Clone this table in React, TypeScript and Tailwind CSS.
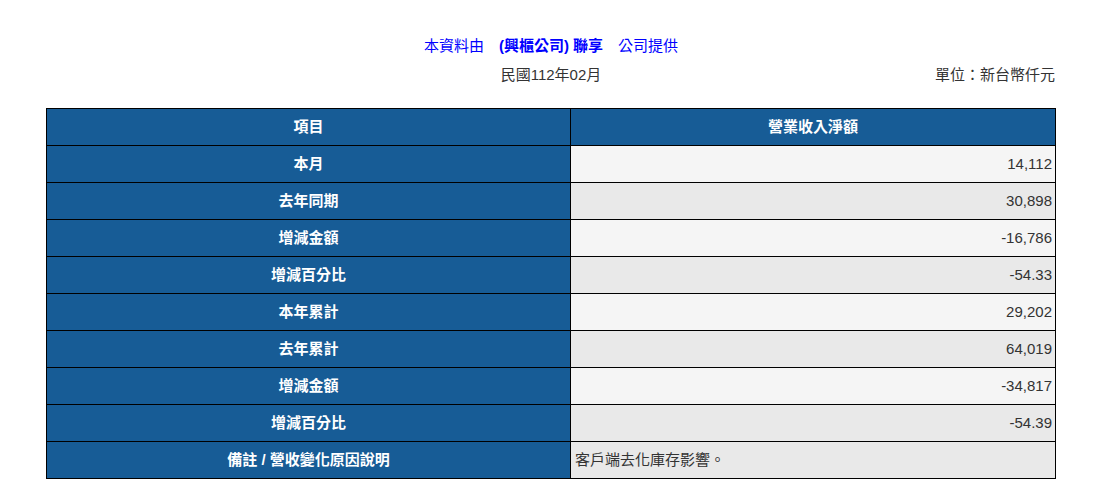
const rows: { label: string; value: string }[] = [
  { label: "本月", value: "14,112" },
  { label: "去年同期", value: "30,898" },
  { label: "增減金額", value: "-16,786" },
  { label: "增減百分比", value: "-54.33" },
  { label: "本年累計", value: "29,202" },
  { label: "去年累計", value: "64,019" },
  { label: "增減金額", value: "-34,817" },
  { label: "增減百分比", value: "-54.39" },
];

export default function App() {
  return (
    <div className="min-h-screen bg-white font-['Liberation_Sans','Noto_Sans_CJK_TC',sans-serif] text-[15px] text-[#333]">
      <div className="ml-[46px] w-[1010px] pt-[36px]">
        <p className="text-center leading-[20px] text-[#0000ff]">
          本資料由　<b>(興櫃公司) 聯享</b>　公司提供
        </p>
        <div className="mt-[9px] grid grid-cols-[1fr_auto_1fr] items-center leading-[20px]">
          <span />
          <span>民國112年02月</span>
          <span className="pr-[1px] text-right">單位：新台幣仟元</span>
        </div>
        <table className="mt-[23px] w-full border-collapse">
          <thead>
            <tr>
              <th className="h-[37px] w-[524px] border border-black bg-[#175c96] font-bold text-white">項目</th>
              <th className="h-[37px] border border-black bg-[#175c96] font-bold text-white">營業收入淨額</th>
            </tr>
          </thead>
          <tbody>
            {rows.map((r, i) => (
              <tr key={i}>
                <td className="h-[37px] border border-black bg-[#175c96] text-center font-bold text-white">{r.label}</td>
                <td className={`h-[37px] border border-black pr-[3px] text-right ${i % 2 === 0 ? "bg-[#f5f5f5]" : "bg-[#e9e9e9]"}`}>
                  {r.value}
                </td>
              </tr>
            ))}
            <tr>
              <td className="h-[37px] border border-black bg-[#175c96] text-center font-bold text-white">備註 / 營收變化原因說明</td>
              <td className="h-[37px] border border-black bg-[#e9e9e9] pl-[4px] text-left">客戶端去化庫存影響。</td>
            </tr>
          </tbody>
        </table>
      </div>
    </div>
  );
}
